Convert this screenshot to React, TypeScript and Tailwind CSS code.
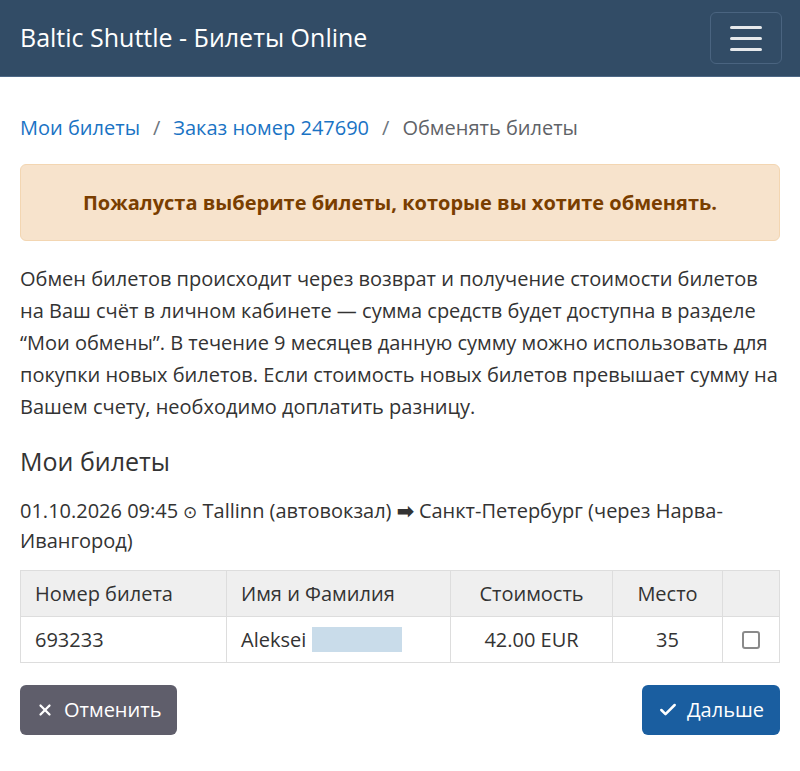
import { Check, X } from 'lucide-react';

const font = { fontFamily: '"Open Sans", "Noto Sans", sans-serif' };

export default function App() {
    return (
        <div className="min-h-[771px] bg-white text-[#333] text-[20px]" style={font}>
            <nav className="h-[77px] bg-[#324c66] border-b border-[#4d6886] flex items-center justify-between pl-[20px] pr-[18px]">
                <span className="text-white text-[25px]">Baltic Shuttle - Билеты Online</span>
                <button className="w-[72px] h-[52px] rounded-md border border-[#4a6480] flex flex-col items-center justify-center gap-[8px]">
                    <span className="block w-[32px] h-[3px] rounded bg-[#e6e9ec]" />
                    <span className="block w-[32px] h-[3px] rounded bg-[#e6e9ec]" />
                    <span className="block w-[32px] h-[3px] rounded bg-[#e6e9ec]" />
                </button>
            </nav>

            <div className="px-[20px]">
                <div className="pt-[36px] pb-[21px] flex items-center gap-[13px] leading-[30px]">
                    <a className="text-[#1a73c4]">Мои билеты</a>
                    <span className="text-[#6c757d]">/</span>
                    <a className="text-[#1a73c4]">Заказ номер 247690</a>
                    <span className="text-[#6c757d]">/</span>
                    <span className="text-[#5f6368]">Обменять билеты</span>
                </div>

                <div className="h-[77px] rounded-md border border-[#f3d6b2] bg-[#f7e3cc] flex items-center justify-center text-[#7a3e00] font-bold">
                    Пожалуста выберите билеты, которые вы хотите обменять.
                </div>

                <p className="mt-[22px] leading-[32px]">
                    Обмен билетов происходит через возврат и получение стоимости билетов на Ваш счёт в личном кабинете — сумма средств будет доступна в разделе “Мои обмены”. В течение 9 месяцев данную сумму можно использовать для покупки новых билетов. Если стоимость новых билетов превышает сумму на Вашем счету, необходимо доплатить разницу.
                </p>

                <h2 className="mt-[22px] text-[25px] leading-[32px]">Мои билеты</h2>

                <p className="mt-[19px] leading-[30px]">
                    01.10.2026 09:45 <span className="text-[17px] leading-none">⊙</span> Tallinn (автовокзал) <span className="font-bold leading-none">➡</span> Санкт-Петербург (через Нарва-Ивангород)
                </p>

                <table className="mt-[14px] w-full border-collapse">
                    <thead>
                        <tr className="bg-[#efefef] h-[46px]">
                            <th className="border border-[#ddd] font-normal text-left px-[14px] w-[206px]">Номер билета</th>
                            <th className="border border-[#ddd] font-normal text-left px-[14px] w-[224px]">Имя и Фамилия</th>
                            <th className="border border-[#ddd] font-normal text-center w-[162px]">Стоимость</th>
                            <th className="border border-[#ddd] font-normal text-center w-[110px]">Место</th>
                            <th className="border border-[#ddd]" />
                        </tr>
                    </thead>
                    <tbody>
                        <tr className="h-[46px]">
                            <td className="border border-[#ddd] px-[14px]">693233</td>
                            <td className="border border-[#ddd] px-[14px]">
                                <div className="flex items-center gap-[6px]">
                                    Aleksei
                                    <span className="inline-block w-[90px] h-[25px] bg-[#c9dcea]" />
                                </div>
                            </td>
                            <td className="border border-[#ddd] text-center">42.00 EUR</td>
                            <td className="border border-[#ddd] text-center">35</td>
                            <td className="border border-[#ddd]">
                                <div className="flex justify-center">
                                    <span className="block w-[18px] h-[18px] rounded-[3px] border-2 border-[#8a8a8a]" />
                                </div>
                            </td>
                        </tr>
                    </tbody>
                </table>

                <div className="mt-[22px] flex justify-between">
                    <button className="h-[50px] px-[16px] rounded-md bg-[#5f5e6b] text-white flex items-center gap-[10px]">
                        <X size={18} strokeWidth={3} />
                        Отменить
                    </button>
                    <button className="h-[50px] px-[16px] rounded-md bg-[#1a5ea0] text-white flex items-center gap-[9px]">
                        <Check size={20} strokeWidth={3} />
                        Дальше
                    </button>
                </div>
            </div>
        </div>
    );
}
